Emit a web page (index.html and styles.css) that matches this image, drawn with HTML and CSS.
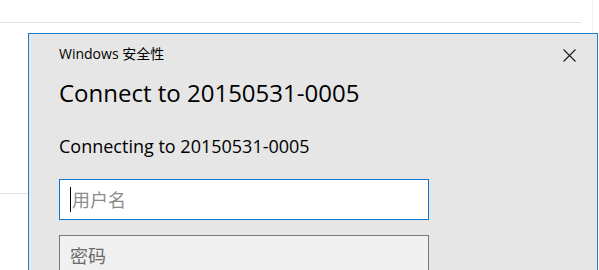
FILE: index.html
```html
<!DOCTYPE html>
<html lang="zh-CN">
<head>
<meta charset="utf-8">
<title>Windows 安全性</title>
<link rel="stylesheet" href="styles.css">
</head>
<body>
<div class="page">
  <div class="main">
    <div class="topbar"></div>
    <div class="list-row"></div>
    <div class="list-row"></div>
  </div>
  <div class="side"></div>
</div>

<div class="dialog" role="dialog" aria-label="Windows 安全性">
  <div class="dlg-head">
    <div class="dlg-title">Windows 安全性</div>
    <button class="close" aria-label="关闭">
      <svg width="13" height="13" viewBox="0 0 13 13"><path d="M0.5 0.5 L12.5 12.5 M12.5 0.5 L0.5 12.5" stroke="#1a1a1a" stroke-width="1.1" fill="none"/></svg>
    </button>
  </div>
  <h1 class="dlg-heading">Connect to 20150531-0005</h1>
  <p class="dlg-sub">Connecting to 20150531-0005</p>
  <div class="field focused"><span class="caret"></span><span class="ph">用户名</span></div>
  <div class="field"><span class="ph dark">密码</span></div>
</div>
</body>
</html>
```

FILE: styles.css
```css
html, body {
  margin: 0;
  padding: 0;
}
body {
  width: 599px;
  height: 270px;
  overflow: hidden;
  background: #ffffff;
  font-family: "Open Sans", "Noto Sans CJK SC", sans-serif;
  position: relative;
}
.page {
  display: flex;
  height: 270px;
  overflow: hidden;
}
.main {
  width: 592px;
  flex-shrink: 0;
  display: flex;
  flex-direction: column;
}
.topbar {
  flex-shrink: 0;
  height: 22px;
  width: 581px;
  border-bottom: 1px solid #e3e3e3;
}
.list-row {
  flex-shrink: 0;
  height: 170px;
  border-bottom: 1px solid #e3e3e3;
}
.side {
  flex: 1;
  border-left: 1px solid #efefef;
}

.dialog {
  position: absolute;
  left: 28px;
  top: 33px;
  width: 570px;
  height: 300px;
  box-sizing: border-box;
  background: #e6e6e6;
  border: 1px solid #1a7fd4;
  padding: 11px 21px 0 30px;
  color: #000;
}
.dlg-head {
  display: flex;
  justify-content: space-between;
  align-items: center;
  height: 18px;
}
.dlg-title {
  font-size: 14px;
  line-height: 18px;
  color: #000;
}
.close {
  border: 0;
  background: none;
  padding: 0;
  width: 13px;
  height: 13px;
  display: flex;
  margin-top: 2px;
}
.dlg-heading {
  margin: 14px 0 0;
  font-size: 24px;
  line-height: 32px;
  font-weight: 400;
  color: #000;
}
.dlg-sub {
  margin: 25px 0 0;
  font-size: 18px;
  line-height: 24px;
  color: #000;
}
.field {
  margin-top: 21px;
  width: 370px;
  height: 41px;
  box-sizing: border-box;
  border: 1px solid #7a7a7a;
  background: #f0f0f0;
  display: flex;
  align-items: center;
  padding-left: 10px;
}
.field + .field {
  margin-top: 15px;
}
.field.focused {
  border-color: #0a78d4;
  background: #ffffff;
}
.caret {
  width: 1px;
  height: 25px;
  background: #000;
  margin-right: 1px;
}
.ph {
  font-size: 18px;
  line-height: 24px;
  color: #8c8c8c;
}
.ph.dark {
  color: #6a6a6a;
}
```
